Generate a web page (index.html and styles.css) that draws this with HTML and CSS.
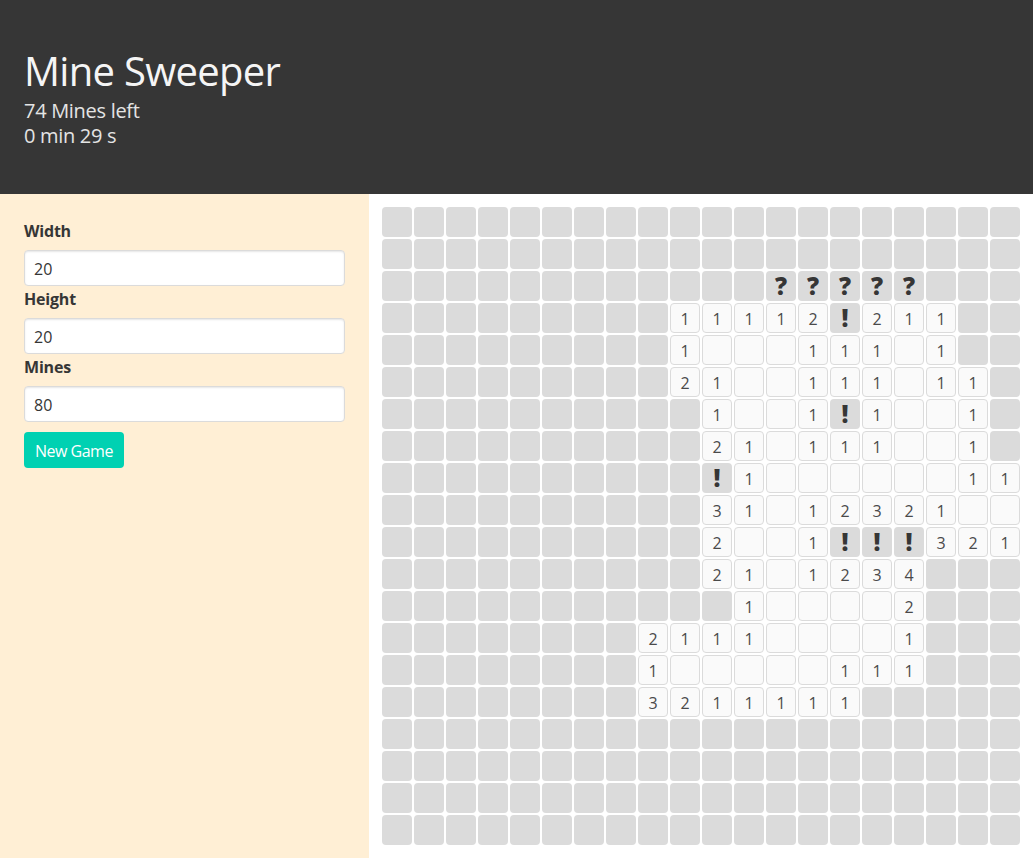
FILE: index.html
```html
<!DOCTYPE html>
<html lang="en">
<head>
<meta charset="utf-8">
<title>Mine Sweeper</title>
<link rel="stylesheet" href="styles.css">
</head>
<body>
<section class="hero">
  <h1 class="title">Mine Sweeper</h1>
  <p class="subtitle">74 Mines left<br>0 min 29 s</p>
</section>
<div class="main">
  <aside class="sidebar">
    <label class="label" for="w">Width</label>
    <input class="input" id="w" type="text" value="20">
    <label class="label" for="h">Height</label>
    <input class="input" id="h" type="text" value="20">
    <label class="label" for="m">Mines</label>
    <input class="input" id="m" type="text" value="80">
    <button class="button" type="button">New Game</button>
  </aside>
  <div class="board" id="board"></div>
</div>
<script src="script.js"></script>
</body>
</html>
```
FILE: styles.css
```css
* { box-sizing: border-box; }
html, body { margin: 0; padding: 0; }
body {
  font-family: "Open Sans", "Noto Sans", sans-serif;
  font-size: 16px;
  line-height: 1.5;
  color: #4a4a4a;
  background: #fff;
}
.hero {
  background: #363636;
  padding: 48px 24px 46px;
}
.title {
  margin: 0;
  color: #f5f5f5;
  font-size: 40px;
  font-weight: 500;
  line-height: 1.125;
  letter-spacing: -0.7px;
}
.subtitle {
  margin: 5px 0 0;
  color: #e4e4e4;
  font-size: 20px;
  line-height: 1.25;
  letter-spacing: -0.3px;
}
.main {
  display: flex;
  align-items: stretch;
}
.sidebar {
  flex: none;
  width: 369px;
  background: #ffefd5;
  padding: 24px;
}
.label {
  display: block;
  font-weight: 700;
  color: #363636;
  padding-top: 1px;
  margin-bottom: 7px;
  letter-spacing: -0.2px;
}
.input {
  display: block;
  width: 100%;
  height: 36px;
  margin: 0;
  border: 1px solid #dbdbdb;
  border-radius: 4px;
  box-shadow: inset 0 1px 2px rgba(10, 10, 10, 0.1);
  padding: 1px 9px 0;
  font-family: inherit;
  font-size: 16px;
  color: #363636;
  background: #fff;
}
.button {
  display: block;
  margin-top: 10px;
  height: 36px;
  padding: 1px 10px 0;
  border: 1px solid transparent;
  border-radius: 4px;
  background: #00d1b2;
  color: #fff;
  font-family: inherit;
  font-size: 16px;
  letter-spacing: -0.5px;
  cursor: pointer;
}
.board {
  padding: 13px;
  display: grid;
  grid-template-columns: repeat(20, 30px);
  grid-auto-rows: 30px;
  gap: 2px;
}
.cell {
  display: flex;
  align-items: center;
  justify-content: center;
  border-radius: 4px;
  background: #dbdbdb;
  font-size: 16px;
  color: #4a4a4a;
  line-height: 1;
}
.cell.open {
  background: #fafafa;
  border: 1px solid #dbdbdb;
  padding-top: 2px;
}
.cell.mark {
  font-weight: 800;
  font-size: 24px;
  color: #363636;
}
```
FILE: script.js
```js
var rows = [
  "####################",
  "####################",
  "############?????###",
  "#########11112!211##",
  "#########1...111.1##",
  "#########21..111.11#",
  "##########1..1!1..1#",
  "##########21.111..1#",
  "##########!1......11",
  "##########31.12321..",
  "##########2..1!!!321",
  "##########21.1234###",
  "###########1....2###",
  "########2111....1###",
  "########1.....111###",
  "########3211111#####",
  "####################",
  "####################",
  "####################",
  "####################"
];
var board = document.getElementById("board");
rows.forEach(function (row) {
  for (var i = 0; i < row.length; i++) {
    var ch = row[i];
    var cell = document.createElement("div");
    cell.className = "cell";
    if (ch === "!" || ch === "?") {
      cell.className += " mark";
      cell.textContent = ch;
    } else if (ch !== "#") {
      cell.className += " open";
      if (ch !== ".") cell.textContent = ch;
    }
    board.appendChild(cell);
  }
});
```
